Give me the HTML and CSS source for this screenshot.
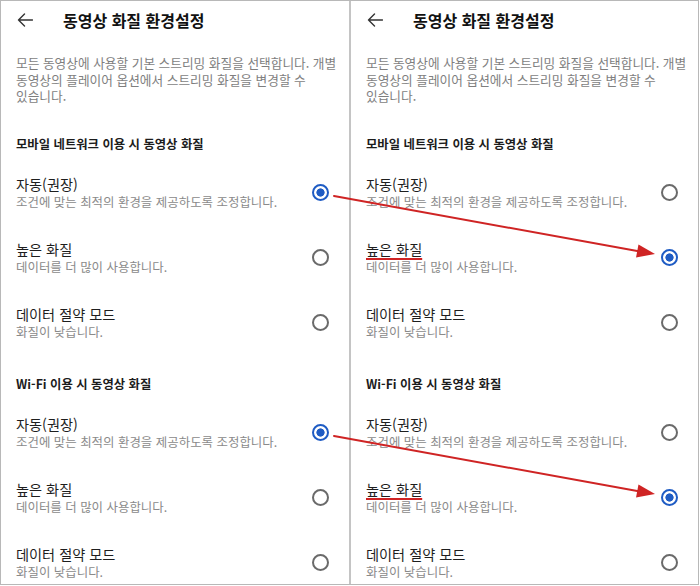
FILE: index.html
```html
<!DOCTYPE html>
<html lang="ko">
<head>
<meta charset="utf-8">
<title>동영상 화질 환경설정</title>
<link rel="stylesheet" href="styles.css">
</head>
<body>
<div class="frame">
  <div class="panel panel-left">
    <div class="topbar">
      <svg class="back" width="16" height="14" viewBox="0 0 16 14"><path d="M15.5 7H1.5M7.5 1L1.5 7L7.5 13" fill="none" stroke="#333" stroke-width="1.4" stroke-linecap="round" stroke-linejoin="round"/></svg>
      <h1 class="title">동영상 화질 환경설정</h1>
    </div>
    <p class="desc">모든 동영상에 사용할 기본 스트리밍 화질을 선택합니다. 개별<br>동영상의 플레이어 옵션에서 스트리밍 화질을 변경할 수<br>있습니다.</p>
    <section class="group">
      <h2 class="group-title">모바일 네트워크 이용 시 동영상 화질</h2>
      <div class="row"><div class="text"><div class="item-title">자동(권장)</div><div class="item-sub">조건에 맞는 최적의 환경을 제공하도록 조정합니다.</div></div><span class="radio on"></span></div>
      <div class="row"><div class="text"><div class="item-title">높은 화질</div><div class="item-sub">데이터를 더 많이 사용합니다.</div></div><span class="radio"></span></div>
      <div class="row"><div class="text"><div class="item-title">데이터 절약 모드</div><div class="item-sub">화질이 낮습니다.</div></div><span class="radio"></span></div>
    </section>
    <section class="group group-2">
      <h2 class="group-title">Wi-Fi 이용 시 동영상 화질</h2>
      <div class="row"><div class="text"><div class="item-title">자동(권장)</div><div class="item-sub">조건에 맞는 최적의 환경을 제공하도록 조정합니다.</div></div><span class="radio on"></span></div>
      <div class="row"><div class="text"><div class="item-title">높은 화질</div><div class="item-sub">데이터를 더 많이 사용합니다.</div></div><span class="radio"></span></div>
      <div class="row"><div class="text"><div class="item-title">데이터 절약 모드</div><div class="item-sub">화질이 낮습니다.</div></div><span class="radio"></span></div>
    </section>
  </div>
  <div class="panel panel-right">
    <div class="topbar">
      <svg class="back" width="16" height="14" viewBox="0 0 16 14"><path d="M15.5 7H1.5M7.5 1L1.5 7L7.5 13" fill="none" stroke="#333" stroke-width="1.4" stroke-linecap="round" stroke-linejoin="round"/></svg>
      <h1 class="title">동영상 화질 환경설정</h1>
    </div>
    <p class="desc">모든 동영상에 사용할 기본 스트리밍 화질을 선택합니다. 개별<br>동영상의 플레이어 옵션에서 스트리밍 화질을 변경할 수<br>있습니다.</p>
    <section class="group">
      <h2 class="group-title">모바일 네트워크 이용 시 동영상 화질</h2>
      <div class="row"><div class="text"><div class="item-title">자동(권장)</div><div class="item-sub">조건에 맞는 최적의 환경을 제공하도록 조정합니다.</div></div><span class="radio"></span></div>
      <div class="row"><div class="text"><div class="item-title"><span class="mark">높은 화질</span></div><div class="item-sub">데이터를 더 많이 사용합니다.</div></div><span class="radio on"></span></div>
      <div class="row"><div class="text"><div class="item-title">데이터 절약 모드</div><div class="item-sub">화질이 낮습니다.</div></div><span class="radio"></span></div>
    </section>
    <section class="group group-2">
      <h2 class="group-title">Wi-Fi 이용 시 동영상 화질</h2>
      <div class="row"><div class="text"><div class="item-title">자동(권장)</div><div class="item-sub">조건에 맞는 최적의 환경을 제공하도록 조정합니다.</div></div><span class="radio"></span></div>
      <div class="row"><div class="text"><div class="item-title"><span class="mark">높은 화질</span></div><div class="item-sub">데이터를 더 많이 사용합니다.</div></div><span class="radio on"></span></div>
      <div class="row"><div class="text"><div class="item-title">데이터 절약 모드</div><div class="item-sub">화질이 낮습니다.</div></div><span class="radio"></span></div>
    </section>
  </div>
  <svg class="arrows" width="700" height="586" viewBox="0 0 700 586">
    <g stroke="#cf2424" stroke-width="2" stroke-linecap="round">
      <line x1="334" y1="196" x2="640" y2="251.5"/>
      <line x1="334" y1="436" x2="640" y2="491.5"/>
    </g>
    <g fill="#cf2424">
      <polygon points="655,254 636,257.5 638.5,244.5"/>
      <polygon points="655,494 636,497.5 638.5,484.5"/>
    </g>
  </svg>
</div>
</body>
</html>
```

FILE: styles.css
```css
* { box-sizing: border-box; }
html, body { margin: 0; padding: 0; background: #fff; }
body {
  font-family: "Noto Sans CJK KR", "Noto Sans", sans-serif;
  color: #222;
}
.frame {
  position: relative;
  display: flex;
  width: 699px;
  height: 585px;
  border: 1px solid #b8b8b8;
  overflow: hidden;
}
.panel {
  flex: 0 0 auto;
  padding: 0 20px 0 15px;
}
.panel-left {
  width: 350px;
  border-right: 2px solid #c4c4c4;
}
.panel-right {
  width: 347px;
}
.topbar {
  display: flex;
  align-items: center;
  height: 38px;
}
.back {
  margin-left: 1px;
  flex: 0 0 auto;
}
.title {
  margin: 0 0 0 30px;
  font-size: 16px;
  font-weight: 700;
  line-height: 38px;
  color: #111;
}
.desc {
  margin: 16px 0 0;
  font-size: 12.7px;
  line-height: 16.5px;
  color: #7e7e7e;
  white-space: nowrap;
}
.group { margin-top: 29px; }
.group-2 { margin-top: 18.5px; }
.group-title {
  margin: 0;
  padding-bottom: 6.5px;
  font-size: 12.35px;
  font-weight: 700;
  line-height: 20px;
  color: #1c1c1c;
}
.row {
  display: flex;
  align-items: center;
  justify-content: space-between;
  height: 65px;
  padding: 14.5px 0;
}
.item-title {
  font-size: 14.2px;
  line-height: 18px;
  color: #1e1e1e;
}
.item-sub {
  font-size: 12.45px;
  line-height: 18px;
  color: #8a8a8a;
  white-space: nowrap;
}
.mark {
  text-decoration: underline;
  text-decoration-color: #cf2424;
  text-decoration-thickness: 2px;
  text-underline-offset: 3px;
}
.radio {
  flex: 0 0 auto;
  width: 17px;
  height: 17px;
  margin-top: -1px;
  border: 2px solid #6a6a6a;
  border-radius: 50%;
}
.radio.on {
  border-color: #1f5cc4;
  background: radial-gradient(circle, #1f5cc4 0, #1f5cc4 3.8px, transparent 4.4px);
}
.arrows {
  position: absolute;
  left: -1px;
  top: -1px;
  pointer-events: none;
}
```
